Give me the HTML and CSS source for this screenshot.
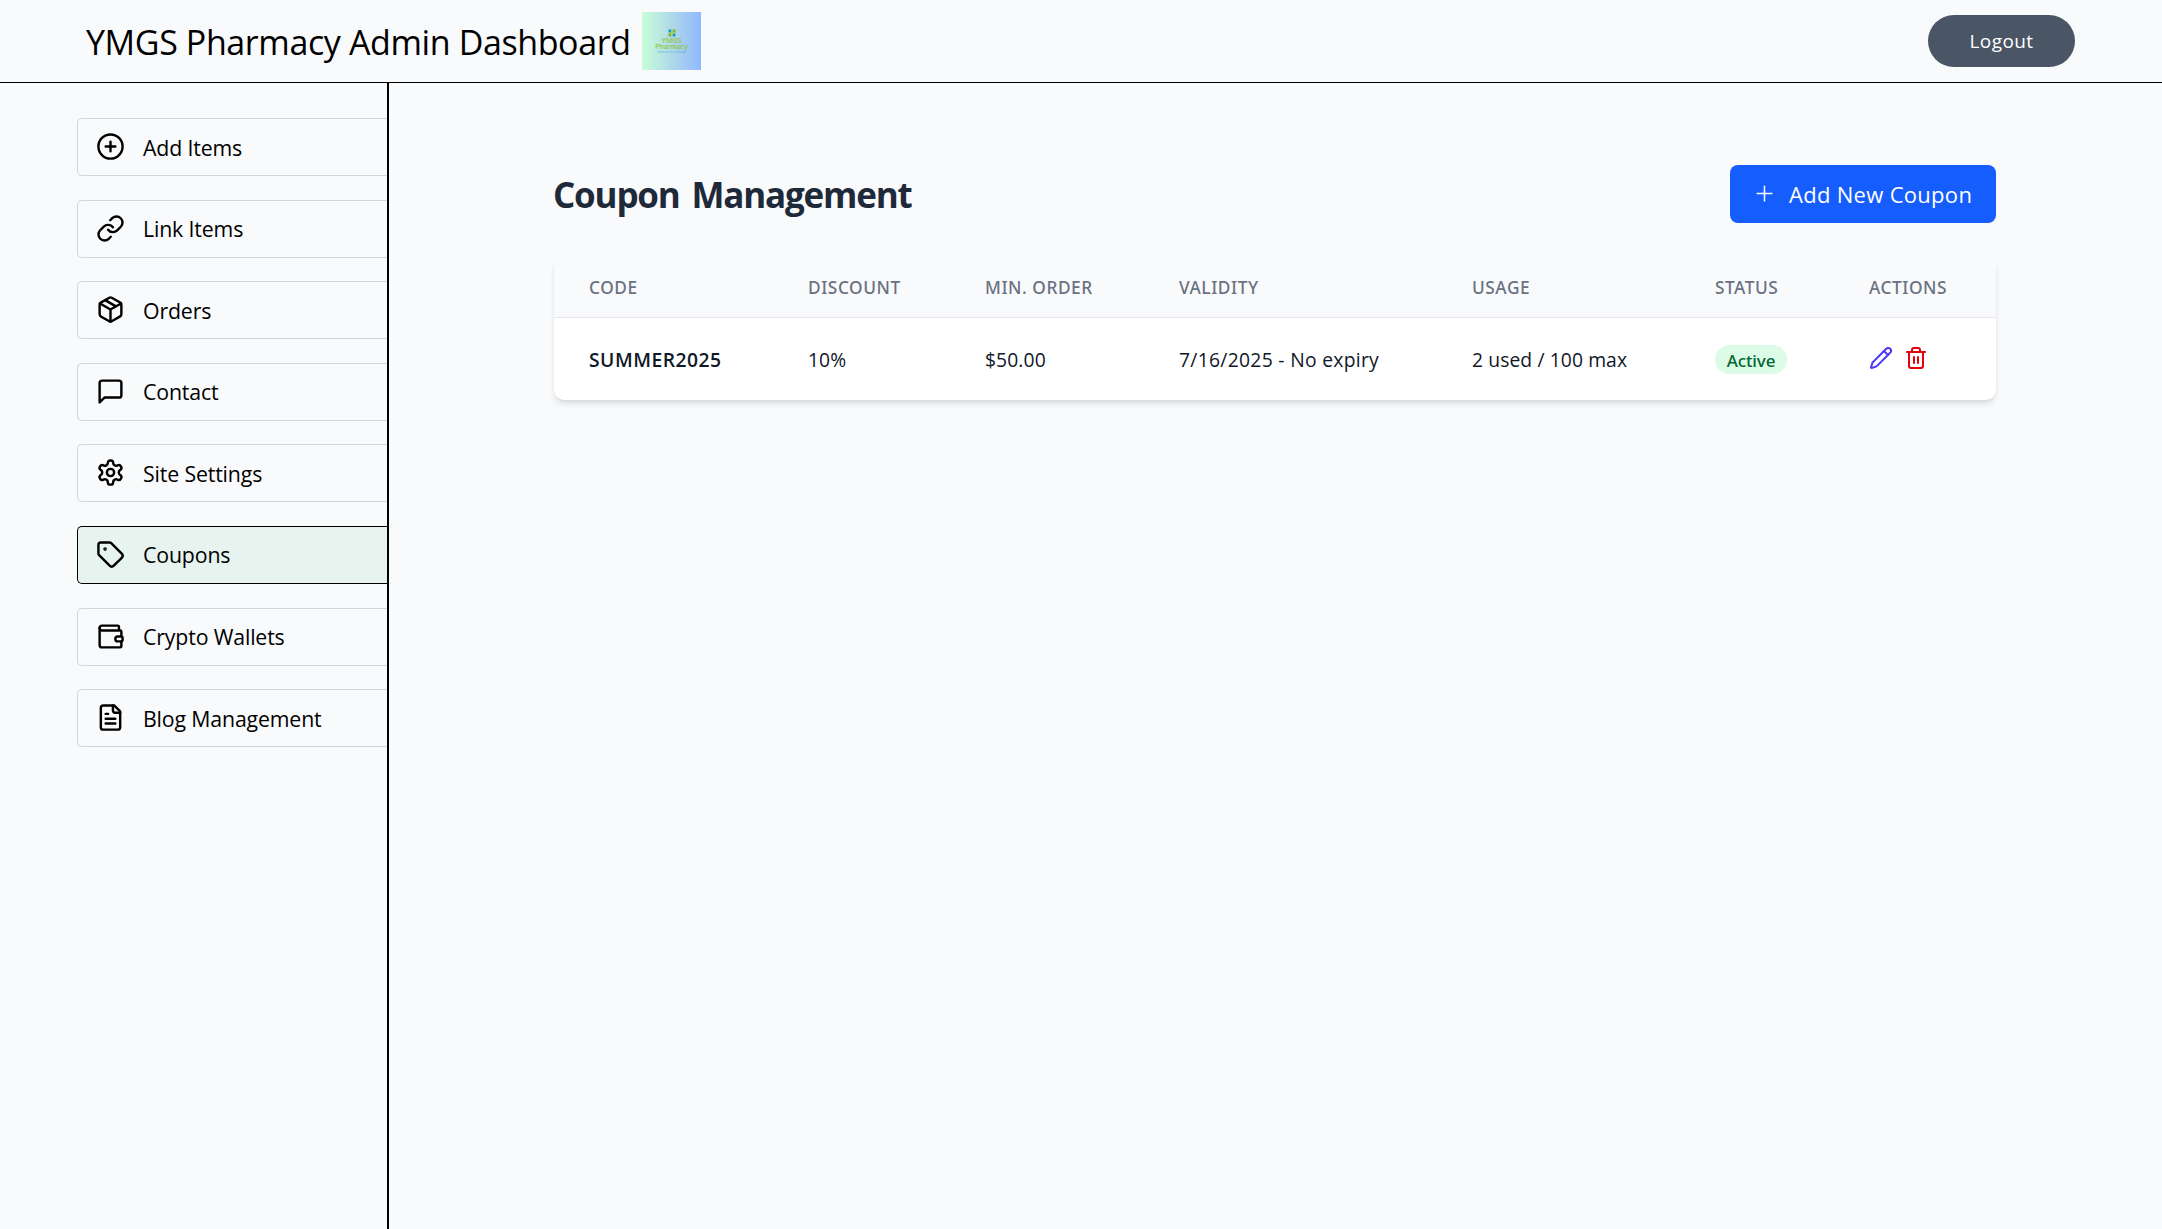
FILE: index.html
```html
<!DOCTYPE html>
<html lang="en">
<head>
<meta charset="utf-8">
<title>YMGS Pharmacy Admin Dashboard</title>
<link rel="stylesheet" href="styles.css">
</head>
<body>
<header class="topbar">
  <div class="brand">
    <h1 class="brand-title">YMGS Pharmacy Admin Dashboard</h1>
    <div class="logo">
      <svg class="logo-mark" viewBox="0 0 8 8"><path fill="#16a0b0" d="M1 .5h2.3v3H.5V1zM4.6 4.6h2.9V7l-.7.6H4.6z"/><path fill="#7fb52d" d="M4.6.5H7l.5.6v2.4H4.6zM.5 4.6h2.8v3H1L.5 7z"/><circle cx="4" cy="4" r="1.3" fill="#b5cf35"/></svg>
      <span class="logo-name">YMGS</span>
      <span class="logo-name">Pharmacy</span>
      <span class="logo-tag">YOUR HEALTH, OUR CARE</span>
    </div>
  </div>
  <button class="logout">Logout</button>
</header>
<div class="shell">
  <nav class="sidebar">
    <a class="item"><svg class="icon" viewBox="0 0 24 24"><circle cx="12" cy="12" r="10"/><path d="M8 12h8M12 8v8"/></svg><span>Add Items</span></a>
    <a class="item"><svg class="icon" viewBox="0 0 24 24"><path d="M10 13a5 5 0 0 0 7.54.54l3-3a5 5 0 0 0-7.07-7.07l-1.72 1.71"/><path d="M14 11a5 5 0 0 0-7.54-.54l-3 3a5 5 0 0 0 7.07 7.07l1.71-1.71"/></svg><span>Link Items</span></a>
    <a class="item"><svg class="icon" viewBox="0 0 24 24"><path d="M11 21.73a2 2 0 0 0 2 0l7-4A2 2 0 0 0 21 16V8a2 2 0 0 0-1-1.73l-7-4a2 2 0 0 0-2 0l-7 4A2 2 0 0 0 3 8v8a2 2 0 0 0 1 1.73z"/><path d="M12 22V12M3.3 7l8.7 5 8.7-5M7.5 4.27l9 5.15"/></svg><span>Orders</span></a>
    <a class="item"><svg class="icon" viewBox="0 0 24 24"><path d="M21 15a2 2 0 0 1-2 2H7l-4 4V5a2 2 0 0 1 2-2h14a2 2 0 0 1 2 2z"/></svg><span>Contact</span></a>
    <a class="item"><svg class="icon" viewBox="0 0 24 24"><path d="M12.22 2h-.44a2 2 0 0 0-2 2v.18a2 2 0 0 1-1 1.73l-.43.25a2 2 0 0 1-2 0l-.15-.08a2 2 0 0 0-2.73.73l-.22.38a2 2 0 0 0 .73 2.73l.15.1a2 2 0 0 1 1 1.72v.51a2 2 0 0 1-1 1.74l-.15.09a2 2 0 0 0-.73 2.73l.22.38a2 2 0 0 0 2.73.73l.15-.08a2 2 0 0 1 2 0l.43.25a2 2 0 0 1 1 1.73V20a2 2 0 0 0 2 2h.44a2 2 0 0 0 2-2v-.18a2 2 0 0 1 1-1.73l.43-.25a2 2 0 0 1 2 0l.15.08a2 2 0 0 0 2.73-.73l.22-.39a2 2 0 0 0-.73-2.73l-.15-.08a2 2 0 0 1-1-1.74v-.5a2 2 0 0 1 1-1.74l.15-.09a2 2 0 0 0 .73-2.73l-.22-.38a2 2 0 0 0-2.73-.73l-.15.08a2 2 0 0 1-2 0l-.43-.25a2 2 0 0 1-1-1.73V4a2 2 0 0 0-2-2z"/><circle cx="12" cy="12" r="3"/></svg><span>Site Settings</span></a>
    <a class="item active"><svg class="icon" viewBox="0 0 24 24"><path d="M12.586 2.586A2 2 0 0 0 11.172 2H4a2 2 0 0 0-2 2v7.172a2 2 0 0 0 .586 1.414l8.704 8.704a2.426 2.426 0 0 0 3.42 0l6.58-6.58a2.426 2.426 0 0 0 0-3.42z"/><circle cx="7.5" cy="7.5" r=".5" fill="currentColor"/></svg><span>Coupons</span></a>
    <a class="item"><svg class="icon" viewBox="0 0 24 24"><path d="M19 7V4a1 1 0 0 0-1-1H5a2 2 0 0 0 0 4h15a1 1 0 0 1 1 1v4h-3a2 2 0 0 0 0 4h3a1 1 0 0 0 1-1v-2a1 1 0 0 0-1-1"/><path d="M3 5v14a2 2 0 0 0 2 2h15a1 1 0 0 0 1-1v-4"/></svg><span>Crypto Wallets</span></a>
    <a class="item"><svg class="icon" viewBox="0 0 24 24"><path d="M15 2H6a2 2 0 0 0-2 2v16a2 2 0 0 0 2 2h12a2 2 0 0 0 2-2V7z"/><path d="M14 2v4a2 2 0 0 0 2 2h4M10 9H8M16 13H8M16 17H8"/></svg><span>Blog Management</span></a>
  </nav>
  <main class="content">
    <div class="page-head">
      <h2 class="page-title">Coupon Management</h2>
      <button class="add"><svg class="icon-plus" viewBox="0 0 24 24"><path d="M3 12h18M12 3v18"/></svg><span>Add New Coupon</span></button>
    </div>
    <div class="card">
      <table class="coupons">
        <colgroup><col class="c-code"><col class="c-discount"><col class="c-min"><col class="c-validity"><col class="c-usage"><col class="c-status"><col class="c-actions"></colgroup>
        <thead><tr><th>CODE</th><th>DISCOUNT</th><th>MIN. ORDER</th><th>VALIDITY</th><th>USAGE</th><th>STATUS</th><th>ACTIONS</th></tr></thead>
        <tbody><tr>
          <td class="code">SUMMER2025</td><td>10%</td><td>$50.00</td><td class="validity">7/16/2025 - No expiry</td><td>2 used / 100 max</td>
          <td><span class="badge">Active</span></td>
          <td><div class="actions">
            <svg class="icon-sm edit" viewBox="0 0 24 24"><path d="M21.174 6.812a1 1 0 0 0-3.986-3.987L3.842 16.174a2 2 0 0 0-.5.83l-1.321 4.352a.5.5 0 0 0 .623.622l4.353-1.32a2 2 0 0 0 .83-.497z"/><path d="m15 5 4 4"/></svg>
            <svg class="icon-sm delete" viewBox="0 0 24 24"><path d="M3 6h18M19 6v14a2 2 0 0 1-2 2H7a2 2 0 0 1-2-2V6M8 6V4a2 2 0 0 1 2-2h4a2 2 0 0 1 2 2v2M10 11v6M14 11v6"/></svg>
          </div></td>
        </tr></tbody>
      </table>
    </div>
  </main>
</div>
</body>
</html>
```
FILE: styles.css
```css
* { box-sizing: border-box; }
body {
  margin: 0;
  height: 1229px;
  display: flex;
  flex-direction: column;
  background: #f9fafc;
  color: #000;
  font-family: "Open Sans", "Noto Sans", sans-serif;
}
h1, h2 { margin: 0; white-space: nowrap; }
button { border: 0; font-family: inherit; color: #fff; }

.topbar {
  height: 83px;
  flex: none;
  display: flex;
  align-items: center;
  justify-content: space-between;
  padding: 0 87px 0 86px;
  border-bottom: 1px solid #000;
}
.brand { display: flex; align-items: center; gap: 13px; }
.brand-title { width: 543px; font-size: 34px; font-weight: 400; line-height: 44px; letter-spacing: -.39px; padding-top: 2px; }
.logo {
  width: 59px;
  height: 58px;
  padding-top: 17px;
  display: flex;
  flex-direction: column;
  align-items: center;
  background: linear-gradient(90deg, #c6ffd8 0%, #b0d9e8 50%, #90b8ff 100%);
}
.logo-mark { width: 8px; height: 8px; flex: none; margin-bottom: 1px; }
.logo-name { font: 500 6.8px/6px "Inter", sans-serif; color: #93c63c; }
.logo-tag { font: 400 2.3px/4px "Inter", sans-serif; color: #55b0d0; white-space: nowrap; margin-top: 1px; }
.logout {
  width: 147px;
  height: 52px;
  padding: 0;
  border-radius: 26px;
  background: #4a5565;
  font-size: 19px;
  letter-spacing: .4px;
}

.shell { flex: 1; display: flex; }
.sidebar {
  width: 389px;
  flex: none;
  padding: 35px 0 0 77px;
  border-right: 2px solid #000;
  display: flex;
  flex-direction: column;
  gap: 23.6px;
}
.item {
  height: 58px;
  display: flex;
  align-items: center;
  gap: 18px;
  padding: 0 0 1px 18px;
  border: 1px solid #d1d5dc;
  border-right: 0;
  border-radius: 5px 0 0 5px;
  font-size: 21.3px;
  letter-spacing: -.15px;
}
.item span { padding-top: 1px; }
.item.active { background: #e6f3ee; border-color: #000; }
.icon, .icon-sm, .icon-plus {
  flex: none;
  fill: none;
  stroke: currentColor;
  stroke-width: 2;
  stroke-linecap: round;
  stroke-linejoin: round;
}
.icon { width: 29px; height: 29px; }

.content { flex: 1; padding: 82px 166px 0 165px; }
.page-head { display: flex; align-items: center; justify-content: space-between; margin-bottom: 34px; }
.page-title { margin-left: -1px; font-size: 35px; font-weight: 700; line-height: 48px; letter-spacing: -1.2px; word-spacing: 4px; color: #1e2939; padding-top: 2px; }
.add {
  width: 266px;
  height: 58px;
  display: flex;
  align-items: center;
  gap: 14px;
  padding: 0 0 1px 24px;
  border-radius: 8px;
  background: #155dfc;
  font-size: 22px;
  letter-spacing: .3px;
  white-space: nowrap;
}
.add span { padding-top: 1px; }
.icon-plus { width: 21px; height: 21px; stroke-width: 1.8; stroke-linecap: butt; }

.card {
  height: 143px;
  overflow: hidden;
  border-radius: 10px;
  background: #fff;
  box-shadow: 0 5px 7px -1px rgba(0, 0, 0, .1), 0 2px 5px -2px rgba(0, 0, 0, .1);
}
.coupons { width: 1442px; table-layout: fixed; border-collapse: separate; border-spacing: 0; }
.c-code { width: 219px; }
.c-discount { width: 177px; }
.c-min { width: 194px; }
.c-validity { width: 293px; }
.c-usage { width: 243px; }
.c-status { width: 154px; }
.c-actions { width: 162px; }
th, td { padding: 0 0 0 35px; text-align: left; white-space: nowrap; }
th {
  height: 61px;
  padding-top: 1px;
  background: #f9fafc;
  border-bottom: 1px solid #e5e7eb;
  color: #6a7282;
  font-family: "Noto Sans", sans-serif;
  font-size: 17.3px;
  font-weight: 500;
  letter-spacing: .55px;
}
td { height: 82px; color: #101828; font-size: 19.3px; letter-spacing: .1px; padding-top: 1px; }
.code { font-weight: 600; letter-spacing: .5px; }
.validity { letter-spacing: .3px; }
.badge {
  display: flex;
  align-items: center;
  justify-content: center;
  width: 72px;
  height: 29px;
  padding-top: 1px;
  border-radius: 15px;
  background: #dcfce7;
  color: #016630;
  font-family: "Noto Sans", sans-serif;
  font-size: 17px;
  font-weight: 500;
  letter-spacing: -.1px;
}
.actions { display: flex; gap: 11px; margin-top: -3px; }
.icon-sm { width: 24px; height: 24px; }
.edit { color: #4f39f6; }
.delete { color: #e7000b; }
```
